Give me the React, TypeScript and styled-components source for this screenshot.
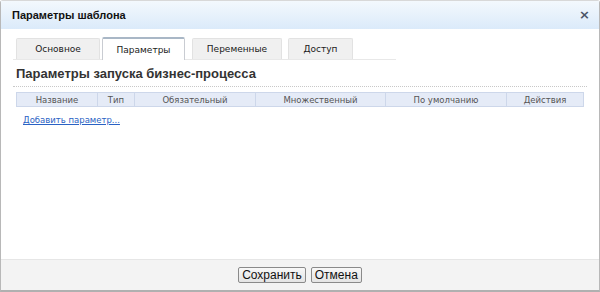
import React from "react";
import styled, { createGlobalStyle } from "styled-components";

const Global = createGlobalStyle`
  html, body { margin: 0; padding: 0; background: #fff; }
  body { width: 600px; height: 292px; overflow: hidden; }
  #root { width: 600px; height: 292px; }
`;

const Dialog = styled.div`
  box-sizing: border-box;
  width: 600px;
  height: 292px;
  border: 1px solid #b8b8b8;
  border-top-color: #d8d8d8;
  border-bottom: 2px solid #b0b0b0;
  border-radius: 3px 3px 0 0;
  display: flex;
  flex-direction: column;
  background: #fff;
  font-family: "DejaVu Sans", Verdana, sans-serif;
`;

const Header = styled.div`
  height: 28px;
  flex: none;
  display: flex;
  align-items: center;
  justify-content: space-between;
  padding: 0 9px 0 11px;
  background: linear-gradient(#f3f8fd, #dbeafa);
`;

const Title = styled.div`
  font-family: "Liberation Sans", Tahoma, sans-serif;
  font-weight: bold;
  font-size: 11px;
  color: #111;
`;

const Close = styled.div`
  font-size: 13px;
  font-weight: bold;
  color: #4a5566;
  line-height: 1;
  margin-top: -1px;
`;

const Body = styled.div`
  flex: 1;
  display: flex;
  flex-direction: column;
  padding: 8px 12px 0 12px;
`;

const TabBar = styled.div`
  display: flex;
  align-items: flex-end;
  gap: 2px;
  width: 380px;
  padding-left: 3px;
  border-bottom: 1px solid #e8e8e8;
`;

const Tab = styled.div<{ $active?: boolean; $w: number; $ml?: number }>`
  box-sizing: border-box;
  width: ${(p) => p.$w}px;
  margin-left: ${(p) => p.$ml ?? 0}px;
  display: flex;
  align-items: center;
  justify-content: center;
  font-family: "DejaVu Sans", Tahoma, sans-serif;
  font-size: 9px;
  color: #1a1a1a;
  background: ${(p) => (p.$active ? "#fff" : "#f0f0f0")};
  border: 1px solid ${(p) => (p.$active ? "#c9ccd2" : "#e2e2e2")};
  border-top: ${(p) => (p.$active ? "2px solid #a9b7c6" : "1px solid #e2e2e2")};
  border-bottom: none;
  border-radius: 2px 2px 0 0;
  margin-bottom: ${(p) => (p.$active ? "-1px" : "0")};
  height: ${(p) => (p.$active ? "23px" : "21px")};
`;

const Heading = styled.div`
  margin-top: 6px;
  padding: 0 3px 5px 3px;
  font-family: "Liberation Sans", Arial, sans-serif;
  font-weight: bold;
  font-size: 13px;
  color: #333;
  border-bottom: 1px dotted #c8c8c8;
`;

const Table = styled.div`
  margin: 5px 3px 0 3px;
  display: grid;
  grid-template-columns: 81px 37px 121px 130px 121px 1fr;
  border: 1px solid #cdd7ea;
  background: #e5ebf7;
`;

const Th = styled.div<{ $last?: boolean }>`
  height: 13px;
  display: flex;
  align-items: center;
  justify-content: center;
  font-size: 8.5px;
  color: #555;
  border-right: ${(p) => (p.$last ? "none" : "1px solid #cdd7ea")};
`;

const AddLink = styled.a`
  margin: 8px 0 0 10px;
  align-self: flex-start;
  font-size: 8.5px;
  color: #2a62c4;
  text-decoration: underline;
  cursor: pointer;
`;

const Footer = styled.div`
  height: 30px;
  flex: none;
  display: flex;
  align-items: center;
  justify-content: center;
  gap: 5px;
  background: #f3f3f3;
  border-top: 1px solid #e6e6e6;
`;

const Button = styled.button`
  height: 16px;
  padding: 0 3px;
  font-family: "Liberation Sans", Arial, sans-serif;
  font-size: 12px;
  color: #111;
  background: linear-gradient(#f8f8f8, #e4e4e4);
  border: 1px solid #8a8a8a;
  border-radius: 2px;
  line-height: 1;
`;

const cols = ["Название", "Тип", "Обязательный", "Множественный", "По умолчанию", "Действия"];

export default function App() {
  return (
    <>
      <Global />
      <Dialog>
        <Header>
          <Title>Параметры шаблона</Title>
          <Close>×</Close>
        </Header>
        <Body>
          <TabBar>
            <Tab $w={84}>Основное</Tab>
            <Tab $w={83} $active>Параметры</Tab>
            <Tab $w={90} $ml={5}>Переменные</Tab>
            <Tab $w={65} $ml={4}>Доступ</Tab>
          </TabBar>
          <Heading>Параметры запуска бизнес-процесса</Heading>
          <Table>
            {cols.map((c, i) => (
              <Th key={c} $last={i === cols.length - 1}>{c}</Th>
            ))}
          </Table>
          <AddLink>Добавить параметр...</AddLink>
        </Body>
        <Footer>
          <Button>Сохранить</Button>
          <Button>Отмена</Button>
        </Footer>
      </Dialog>
    </>
  );
}
